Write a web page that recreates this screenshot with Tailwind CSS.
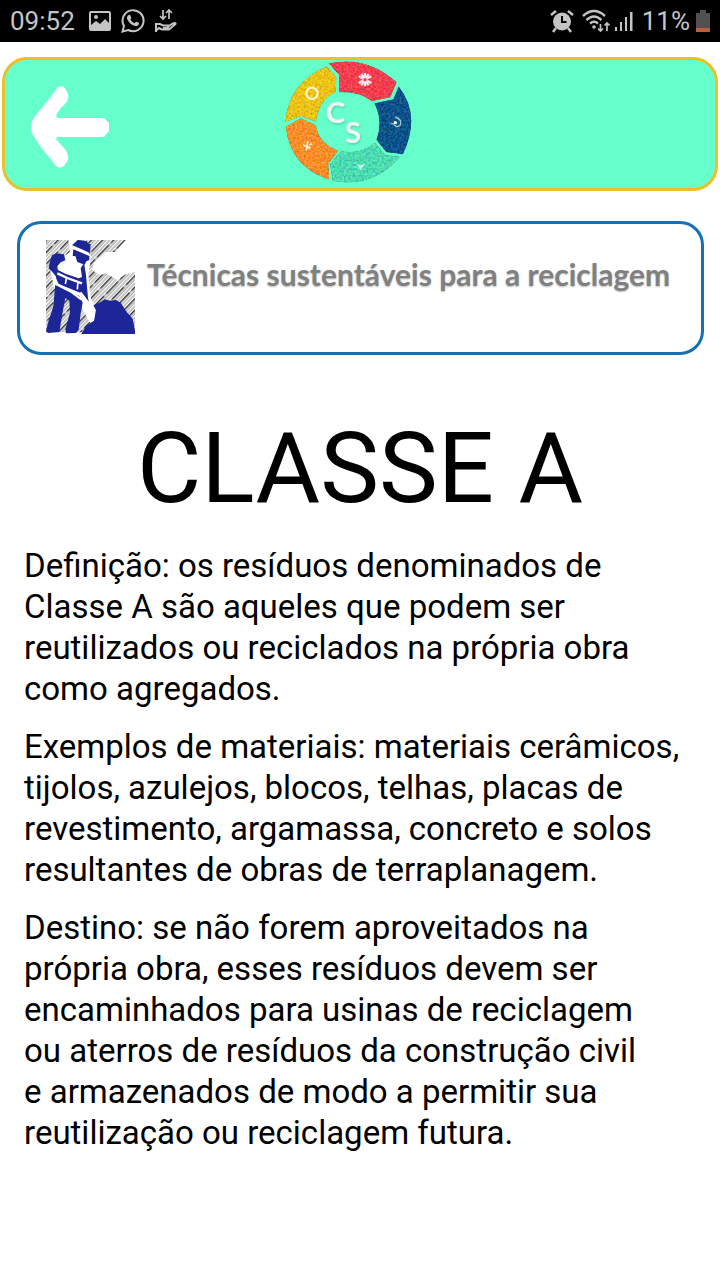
<!DOCTYPE html>
<html lang="pt-BR">
<head>
<meta charset="utf-8">
<meta name="viewport" content="width=device-width, initial-scale=1">
<title>Classe A</title>
<script src="https://cdn.jsdelivr.net/npm/@tailwindcss/browser@4"></script>
</head>
<body class="min-h-screen bg-white font-[Roboto,sans-serif] text-black">
<div class="flex h-[42px] items-center justify-between bg-black pl-[10px] pr-[10px] text-[26px] leading-[42px] text-[#c4c4c4]">
  <div class="flex items-center gap-[10px]">
    <span class="mr-1">09:52</span>
    <svg class="h-6 w-[22px]" viewBox="0 0 22 24"><path fill="#c4c4c4" fill-rule="evenodd" d="M2 2h18q2 0 2 2v16q0 2-2 2H2q-2 0-2-2V4q0-2 2-2zM2 4v12l5-4 4 3 5-5 4 4V4zM7 6a2 2 0 1 1 0 4 2 2 0 0 1 0-4z"/></svg>
    <svg class="h-6 w-6" viewBox="0 0 24 24"><path fill="none" stroke="#c4c4c4" stroke-width="2" d="M1.500 22.500l1.500-5.500a10.500 10.500 0 1 1 4.200 4z"/><path fill="#c4c4c4" d="M7 6.500c1-1 2-1 2.500.2l.8 2c.2.600-.7 1.300-.9 1.700.9 1.800 2.400 3 4.200 3.800.6-.6 1.200-1.800 1.800-1.500l2.300 1.100c.6.400.2 2-.7 2.600-1.500 1.100-3.300.7-5.500-.4-2.300-1.200-4-3-5-5.200-.8-1.800-.5-3.300.5-4.300z"/></svg>
    <svg class="h-6 w-[22px]" viewBox="0 0 22 24" fill="none" stroke="#c4c4c4" stroke-width="2"><path d="M8 1v9M5 7l3 3 3-3M14 10V1M11 4l3-3 3 3" stroke-width="1.700"/><path d="M1 14v9M1 15h4l3 1.500h5q1.500 1.500-1 2.500H8M12 18l6-3.500q3-1 2.500.5L14 20.500H7L4 19l-3 2.500"/></svg>
  </div>
  <div class="flex items-center gap-1">
    <svg class="mr-1 h-6 w-6" viewBox="0 0 24 24"><circle cx="12" cy="12.500" r="9" fill="#c4c4c4"/><path d="M1 6l5-4M23 6l-5-4M6 19l-3 4M18 19l3 4" stroke="#c4c4c4" stroke-width="2.500"/><path d="M12 7v6h4.500" fill="none" stroke="#000" stroke-width="2"/></svg>
    <svg class="h-6 w-7" viewBox="0 0 28 24" fill="none" stroke="#c4c4c4" stroke-width="2.400"><path d="M1 7q11-10 22 0M4.500 11q7.500-7 15 0M8 14.500q4-3.500 8 0"/><circle cx="12" cy="18" r="1.800" fill="#c4c4c4" stroke="none"/><path stroke-width="1.700" d="M18.500 15v7M16 19.500l2.500 2.500 2.500-2.500M25 22v-8M22.500 16.500L25 14l2.500 2.500"/></svg>
    <svg class="mr-1 h-6 w-5" viewBox="0 0 20 24" fill="#c4c4c4"><path d="M1 18h2v4H1zM6 13h2v9H6zM11 8h2v14h-2zM16 3h2.500v19H16z"/></svg>
    <span class="mr-[2px]">11%</span>
    <svg class="h-6 w-[14px]" viewBox="0 0 14 24"><path fill="#515151" d="M4 1h6v3h4v19H0V4h4z"/><path fill="#bd5f3d" d="M0 19h14v4H0z"/></svg>
  </div>
</div>

<header class="mx-[2px] mt-[15px] grid h-[134px] grid-cols-[1fr_auto_1fr] items-center rounded-[25px] border-[3px] border-[#edc02a] bg-[#66ffcc]">
  <button type="button" aria-label="Voltar" class="ml-[25px] w-20 pt-1">
    <svg class="h-[84px] w-20" viewBox="0 0 80 84" fill="#fff"><path d="M28 3q4-2 7 1l3 6q1 6-3 10-6 5-9 12l2 2h46l5 5v8l-5 6H27l-1 2q4 5 8 9 5 6 4 12l-4 6q-4 3-8 0l-6-8Q10 63 5 54q-5-7-4-12 1-7 5-11l14-17z"/></svg>
  </button>
  <svg class="h-32 w-[152px]" viewBox="0 -3 456 384" role="img" aria-label="CS">
    <defs>
      <filter id="grain" x="0" y="0" width="1" height="1" color-interpolation-filters="sRGB">
        <feTurbulence type="fractalNoise" baseFrequency="0.150" numOctaves="2" seed="4"/>
        <feColorMatrix values="1 0 0 0 0  0 1 0 0 0  0 0 1 0 0  0 0 0 0 1" result="n"/>
        <feComposite in="SourceGraphic" in2="n" operator="arithmetic" k1="0" k2="1" k3="0.500" k4="-0.240"/>
        <feComposite in2="SourceGraphic" operator="in"/>
      </filter>
      <filter id="soft"><feDropShadow dx="2" dy="4" stdDeviation="3" flood-color="#2f9c7c" flood-opacity="0.450"/></filter>
    </defs>
    <g transform="translate(-27 -18)">
      <g filter="url(#grain)">
        <path fill="#e9c015" d="M31 201Q39 85 155 34L184 67 182 112Q133 132 123 200L78 183z"/>
        <path fill="#f23b4c" d="M161 25Q277 0 365 82L346 127 291 139Q253 108 192 112L192 59z"/>
        <path fill="#095087" d="M371 94Q440 180 384 298L334 292 304 254Q325 200 298 145L355 133z"/>
        <path fill="#fa8b26" d="M32 215L77 190 123 211Q130 265 190 287L160 326 163 374Q45 336 32 215z"/>
        <path fill="#49d8ae" d="M173 378L165 326 198 288Q252 301 300 263L330 300 375 305Q295 400 173 378z"/>
      </g>
      <circle cx="111" cy="115" r="17" fill="none" stroke="#fff3bd" stroke-width="7"/>
      <path stroke="#ffe3e8" stroke-width="7" d="M270 54v40M251 64l38 20M251 84l38-20M259 57l22 34M281 57l-22 34"/>
      <circle cx="270" cy="74" r="5" fill="#f23b4c"/>
      <path fill="none" stroke="#9cc4dc" stroke-width="4" d="M361 186q22 8 15 24-10 10-19-1M347 205l10 2"/>
      <circle cx="361" cy="203" r="5" fill="#fff"/>
      <path fill="none" stroke="#fff0d6" stroke-width="5" d="M99 258l-3 14 10 9M84 269l13 9-5 8M103 270l8-4"/>
      <path fill="#dcfff5" d="M245 324l10 8 15-6-14 20z"/>
      <text x="152" y="205" fill="#f1f6f4" font-family="Lato, sans-serif" font-weight="700" font-size="88" filter="url(#soft)">C<tspan dy="60">S</tspan></text>
    </g>
  </svg>
</header>

<main class="pb-10">
  <section class="mr-4 mt-[30px] ml-[17px] flex h-[134px] items-start gap-3 rounded-[24px] border-[3px] border-[#1570b5] pl-[26px] pt-[16px]">
    <svg class="h-[94px] w-[89px] shrink-0" viewBox="0 0 267 282" role="img" aria-label="Trabalhador com pá">
      <defs>
        <pattern id="hatch" width="24" height="60" patternUnits="userSpaceOnUse" patternTransform="rotate(44)">
          <path fill="#fff" d="M0 0h24v60H0z"/><path fill="#a8a8a8" d="M0 0h5v60H0zM8 0h4v60H8zM16 0h4v60h-4z"/><path fill="#333" d="M0 0h4v50H0z"/>
        </pattern>
      </defs>
      <path fill="url(#hatch)" d="M0 0h240l-32 36h-30l-34 32-6 22 24 16 18-6 34 20 22-16 31-8v181H0z"/>
      <path fill="#fff" d="M67 0h24l44 48-8 60 8 68 12 20 2 46-17 6-34-60-74-44-10-50 18-30 40-28z"/>
      <path fill="#1d2696" d="M85 10l10-10 28 4 4 8h7l-2 27-54-24zM82 28l48 20v12l-9 4-5 10-22-8-6-18h-8z"/>
      <path fill="#1d2696" d="M18 46l12-6 24 3 4 18-14 6-10 12 2 14 6 8-8 14-14-18-12-12 4-22z"/>
      <path fill="#1d2696" d="M36 90l22 11 40 14 10-4-4-26 10-16 6 36 6 70 6 22-12-8-16-30-66-27-8-18z"/>
      <path fill="#1d2696" d="M28 130l34 16 38 22 10 20-6 32-6 50-8 9-30 1-2-12 14-50-2-36-12-8-8 42-10 60-34 3-6-6 6-24 16-50z"/>
      <path fill="none" stroke="#fff" stroke-width="7" d="M22 128l52 26 32 24M34 100l30 14 44 16"/>
      <path fill="none" stroke="#fff" stroke-width="5" d="M62 112l-4 20M96 124l-2 24M76 58v20"/>
      <path fill="#1d2696" d="M106 282l14-24 24-16 6-32-8-14 22-10 12-8 16 4 18-2 14 8 18 28 18 20 7 36v10z"/>
      <path fill="none" stroke="#fff" stroke-width="10" stroke-linejoin="round" d="M102 158l30 40 8 38"/>
      <path fill="#fff" d="M122 190l20 10-2 16 4 24-14-6z"/>
    </svg>
    <h2 class="mt-[14px] whitespace-nowrap font-[Lato,sans-serif] text-[30px] leading-[40px] font-bold text-[#808080] text-shadow-[0_1px_2px_#bbb]">Técnicas sustentáveis para a reciclagem</h2>
  </section>

  <h1 class="mt-[54px] text-center text-[99px] leading-[118px]">CLASSE A</h1>
  <div class="mt-[18px] space-y-[17px] px-6 text-[33px] leading-[41px]">
    <p>Definição: os resíduos denominados de<br>Classe A são aqueles que podem ser<br>reutilizados ou reciclados na própria obra<br>como agregados.</p>
    <p>Exemplos de materiais: materiais cerâmicos,<br>tijolos, azulejos, blocos, telhas, placas de<br>revestimento, argamassa, concreto e solos<br>resultantes de obras de terraplanagem.</p>
    <p>Destino: se não forem aproveitados na<br>própria obra, esses resíduos devem ser<br>encaminhados para usinas de reciclagem<br>ou aterros de resíduos da construção civil<br>e armazenados de modo a permitir sua<br>reutilização ou reciclagem futura.</p>
  </div>
</main>
</body>
</html>
